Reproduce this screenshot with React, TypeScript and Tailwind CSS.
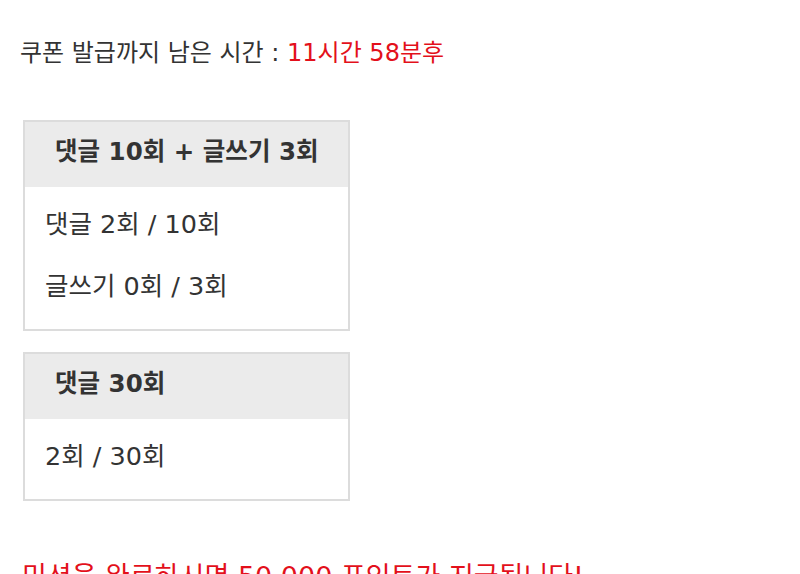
const missions = [
  {
    title: "댓글 10회 + 글쓰기 3회",
    rows: ["댓글 2회 / 10회", "글쓰기 0회 / 3회"],
  },
  {
    title: "댓글 30회",
    rows: ["2회 / 30회"],
  },
];

const App = () => {
  return (
    <div
      className="min-h-[574px] bg-white px-[20px] pt-[35px] text-[24px] leading-[36px] text-[#333]"
      style={{ fontFamily: '"DejaVu Sans", "Noto Sans CJK KR", sans-serif' }}
    >
      <p>
        쿠폰 발급까지 남은 시간 : <span className="text-[#e3101b]">11시간 58분후</span>
      </p>

      <div className="mt-[49px] ml-[3px] flex flex-col gap-[21px]">
        {missions.map((m) => (
          <div key={m.title} className="w-[327px] border-2 border-[#dcdcdc]">
            <div className="flex h-[65px] items-center bg-[#ebebeb] pb-[6px] pl-[30px] text-[24.5px] font-bold">
              {m.title}
            </div>
            <div className="pt-[6px] pb-[12px] pl-[20px] text-[25.5px]">
              {m.rows.map((r) => (
                <p key={r} className="leading-[62px]">
                  {r}
                </p>
              ))}
            </div>
          </div>
        ))}
      </div>

      <p className="mt-[58px] ml-[2px] text-[27px] text-[#e3101b]">
        미션을 완료하시면 50,000 포인트가 지급됩니다!
      </p>
    </div>
  );
};

export default App;
